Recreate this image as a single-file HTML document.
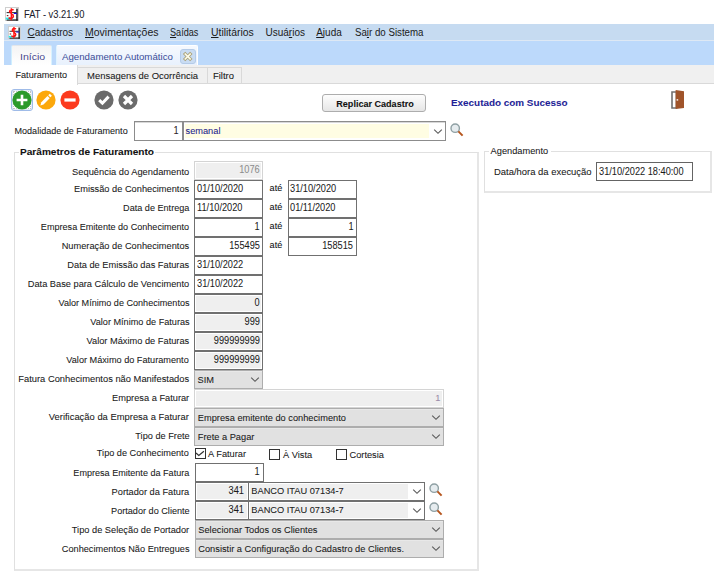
<!DOCTYPE html>
<html><head><meta charset="utf-8"><title>FAT</title>
<style>
html,body{margin:0;padding:0}
body{width:720px;height:575px;background:#fff;position:relative;overflow:hidden;font-family:"Liberation Sans",sans-serif}
.a{position:absolute}
.t{position:absolute;white-space:nowrap;line-height:20px;-webkit-text-stroke:0.07px currentColor}
u{text-decoration:underline;text-underline-offset:1px}
</style></head><body>
<svg class="a" style="left:5px;top:7px" width="14" height="14" viewBox="0 0 14 14">
<rect x="0.5" y="0.5" width="13" height="13" fill="#fff" stroke="#cfcfcf" stroke-width="1"/>
<rect x="11.3" y="1.6" width="1.4" height="12" fill="#111"/>
<rect x="1.6" y="12.4" width="11.1" height="1.2" fill="#111"/>
<rect x="1.6" y="5.2" width="9.8" height="0.9" fill="#111"/>
<rect x="8.8" y="6" width="3" height="1" fill="#10e"/>
<rect x="0.8" y="10.6" width="7.2" height="1.8" fill="#2ee"/>
<rect x="1.8" y="8" width="1.6" height="1.2" fill="#822"/>
<path d="M8.6 3.2C7.6 2.3 4.6 2.3 4.6 4.6C4.6 6.6 8.4 6.4 8.4 9.2C8.4 11.6 5 11.8 3.6 10.6M6.4 1.2V13.2" stroke="#f11" stroke-width="1.5" fill="none"/>
</svg>
<div class="t" style="left:23.5px;top:5px;font-size:10.4px;font-weight:normal;color:#1c1c2c;transform:scaleX(0.900);transform-origin:left center;">FAT - v3.21.90</div>
<div class="a" style="left:4px;top:24px;width:710px;height:16px;background:#c6dbf1"></div>
<div class="a" style="left:4px;top:40px;width:710px;height:1px;background:#dde8f4"></div>
<div class="a" style="left:4px;top:41px;width:710px;height:24px;background:#bcd9fb"></div>
<svg class="a" style="left:7.5px;top:26px" width="13" height="13" viewBox="0 0 14 14">
<rect x="0.5" y="0.5" width="13" height="13" fill="#fff" stroke="#cfcfcf" stroke-width="1"/>
<rect x="11.3" y="1.6" width="1.4" height="12" fill="#111"/>
<rect x="1.6" y="12.4" width="11.1" height="1.2" fill="#111"/>
<rect x="1.6" y="5.2" width="9.8" height="0.9" fill="#111"/>
<rect x="8.8" y="6" width="3" height="1" fill="#10e"/>
<rect x="0.8" y="10.6" width="7.2" height="1.8" fill="#2ee"/>
<rect x="1.8" y="8" width="1.6" height="1.2" fill="#822"/>
<path d="M8.6 3.2C7.6 2.3 4.6 2.3 4.6 4.6C4.6 6.6 8.4 6.4 8.4 9.2C8.4 11.6 5 11.8 3.6 10.6M6.4 1.2V13.2" stroke="#f11" stroke-width="1.5" fill="none"/>
</svg>
<div class="t" style="left:27.5px;top:23px;font-size:10px;font-weight:normal;color:#1a1a1a;-webkit-text-stroke:0;"><u>C</u>adastros</div>
<div class="t" style="left:84.5px;top:23px;font-size:10px;font-weight:normal;color:#1a1a1a;-webkit-text-stroke:0;transform:scaleX(1.050);transform-origin:left center;"><u>M</u>ovimentações</div>
<div class="t" style="left:169.5px;top:23px;font-size:10px;font-weight:normal;color:#1a1a1a;-webkit-text-stroke:0;transform:scaleX(0.910);transform-origin:left center;"><u>S</u>aídas</div>
<div class="t" style="left:210.5px;top:23px;font-size:10px;font-weight:normal;color:#1a1a1a;-webkit-text-stroke:0;transform:scaleX(1.040);transform-origin:left center;"><u>U</u>tilitários</div>
<div class="t" style="left:265.5px;top:23px;font-size:10px;font-weight:normal;color:#1a1a1a;-webkit-text-stroke:0;">Usuá<u>r</u>ios</div>
<div class="t" style="left:316.2px;top:23px;font-size:10px;font-weight:normal;color:#1a1a1a;-webkit-text-stroke:0;"><u>A</u>juda</div>
<div class="t" style="left:355px;top:23px;font-size:10px;font-weight:normal;color:#1a1a1a;-webkit-text-stroke:0;transform:scaleX(0.970);transform-origin:left center;">Sa<u>i</u>r do Sistema</div>
<div class="a" style="left:11px;top:45px;width:41px;height:20px;background:linear-gradient(#f4f4f4,#ffffff);border:1px solid #e2e6ea;border-left-color:#cfefff;border-right-color:#d8f2ff;border-bottom:none;border-radius:2px 2px 0 0;box-sizing:border-box"></div>
<div class="t" style="left:19.9px;top:47px;font-size:9.7px;font-weight:normal;color:#48488e;-webkit-text-stroke:0;transform:scaleX(1.090);transform-origin:left center;">Início</div>
<div class="a" style="left:56px;top:45px;width:142px;height:20px;background:linear-gradient(#f6f9fe,#e8f1fd);border:1px solid #ffffff;border-left-color:#dff4ff;border-bottom:none;border-radius:2px 2px 0 0;box-sizing:border-box"></div>
<div class="t" style="left:62px;top:47px;font-size:9.56px;font-weight:normal;color:#3a4c98;-webkit-text-stroke:0;transform:scaleX(1.014);transform-origin:left center;">Agendamento Automático</div>
<div class="a" style="left:180px;top:49px;width:16px;height:15px;background:#c9dcf3;border:1px solid #b4cbe8;border-radius:3px;box-sizing:border-box"></div>
<svg class="a" style="left:182px;top:51px" width="12" height="11" viewBox="0 0 12 11"><path d="M3.3 3.1L8.1 7.9M8.1 3.1L3.3 7.9" stroke="#aaa27a" stroke-width="3.4" stroke-linecap="square"/><path d="M3.3 3.1L8.1 7.9M8.1 3.1L3.3 7.9" stroke="#fdfbe8" stroke-width="1.7" stroke-linecap="square"/></svg>
<div class="a" style="left:4px;top:65px;width:710px;height:19px;background:#f0f0f0;border-bottom:1px solid #d9d9d9;box-sizing:border-box"></div>
<div class="a" style="left:4px;top:65px;width:74px;height:20px;background:#ffffff;border-right:1px solid #d9d9d9;box-sizing:border-box"></div>
<div class="a" style="left:78px;top:67px;width:130px;height:17px;background:#f0f0f0;border:1px solid #d9d9d9;border-left:none;box-sizing:border-box"></div>
<div class="a" style="left:207px;top:67px;width:35px;height:17px;background:#f0f0f0;border:1px solid #d9d9d9;box-sizing:border-box"></div>
<div class="t" style="left:15.5px;top:65px;font-size:9.1px;font-weight:normal;color:#1a1a1a;">Faturamento</div>
<div class="t" style="left:87px;top:66px;font-size:9.4px;font-weight:normal;color:#1a1a1a;transform:scaleX(1.010);transform-origin:left center;">Mensagens de Ocorrência</div>
<div class="t" style="left:213px;top:66px;font-size:9.0px;font-weight:normal;color:#1a1a1a;transform:scaleX(1.050);transform-origin:left center;">Filtro</div>
<div class="a" style="left:11px;top:89px;width:22px;height:22px;border:1px solid #9fbbe8;border-radius:3px;box-shadow:inset 0 0 0 0.5px #c9dbf5;box-sizing:border-box"></div>
<div class="a" style="left:13px;top:91px;width:18px;height:18px;border:1px dotted #c4c4c4;box-sizing:border-box"></div>
<svg class="a" style="left:12.3px;top:89.6px" width="20" height="20" viewBox="0 0 20 20"><circle cx="10" cy="10" r="9.6" fill="#2b9a2b"/><path d="M10 4.8V15.2M4.6 10H15.4" stroke="#fff" stroke-width="2.6"/></svg>
<svg class="a" style="left:36.3px;top:89.7px" width="20" height="20" viewBox="0 0 20 20"><circle cx="10" cy="10" r="9.6" fill="#fca80c"/><path d="M4.4 15.4L5.3 12.3L11.5 6.1L13.7 8.3L7.5 14.5Z" fill="#fff"/><path d="M13.3 6.3L14.8 4.8" stroke="#fff" stroke-width="3"/></svg>
<svg class="a" style="left:60.3px;top:89.8px" width="20" height="20" viewBox="0 0 20 20"><circle cx="10" cy="10" r="9.6" fill="#fc3a1e"/><rect x="4.4" y="8.4" width="11.2" height="3.2" fill="#fff"/></svg>
<svg class="a" style="left:94.2px;top:89.8px" width="20" height="20" viewBox="0 0 20 20"><circle cx="10" cy="10" r="9.6" fill="#6b6b6b"/><path d="M5.2 10.2L8.4 13.2L14.6 6.6" stroke="#fff" stroke-width="3" fill="none"/></svg>
<svg class="a" style="left:118.0px;top:89.8px" width="20" height="20" viewBox="0 0 20 20"><circle cx="10" cy="10" r="9.6" fill="#6b6b6b"/><path d="M6 6L14 14M14 6L6 14" stroke="#fff" stroke-width="3.2"/></svg>
<div class="a" style="left:322px;top:94px;width:104px;height:18px;background:linear-gradient(#fdfdfd,#e6e6e6);border:1px solid #adadad;border-radius:3px;box-sizing:border-box"></div>
<div class="t" style="left:336.3px;top:94px;font-size:9.05px;font-weight:bold;color:#111;">Replicar Cadastro</div>
<div class="t" style="left:451.0px;top:93px;font-size:9.73px;font-weight:bold;color:#1f1f97;transform:scaleX(1.018);transform-origin:left center;">Executado com Sucesso</div>
<svg class="a" style="left:670px;top:89px" width="16" height="21" viewBox="0 0 16 21">
<path d="M2 3H6.5V19H2Z" fill="none" stroke="#707070" stroke-width="1.6"/>
<path d="M5.6 1L14 2.2V19L5.6 20Z" fill="#a0542a"/>
<rect x="6.6" y="10.2" width="1.6" height="1.4" fill="#fff"/>
</svg>
<div class="t" style="left:14.5px;top:121px;font-size:9.05px;font-weight:normal;color:#1a1a1a;">Modalidade de Faturamento</div>
<div class="a" style="left:134px;top:121px;width:312px;height:20px;background:#fff;border:1px solid #8c8c8c;box-shadow:inset 0 1px 0 #d8d8d8;box-sizing:border-box"></div>
<div class="a" style="left:182px;top:122px;width:2px;height:18px;background:#8c8c8c"></div>
<div class="t" style="right:541px;top:121px;font-size:10.2px;font-weight:normal;color:#2a1a2a;text-align:right;-webkit-text-stroke:0.04px currentColor;transform:scaleX(0.905);transform-origin:right center;">1</div>
<div class="a" style="left:185px;top:124px;width:244px;height:14px;background:#fffde3"></div>
<div class="t" style="left:185.5px;top:121px;font-size:9.25px;font-weight:normal;color:#1e1e8e;">semanal</div>
<svg class="a" style="left:432.8px;top:129.2px" width="10" height="6" viewBox="0 0 10 6"><path d="M1.2 0.6L5 4.3L8.8 0.6" stroke="#5a5a5a" stroke-width="1.15" fill="none"/></svg>
<svg class="a" style="left:450px;top:123px" width="14" height="14" viewBox="0 0 14 14">
<circle cx="5.2" cy="5.2" r="4.2" fill="#e6ecef" stroke="#8fa0a4" stroke-width="1.4"/>
<path d="M8.4 8.4L12.6 12.6" stroke="#b5541c" stroke-width="2"/>
</svg>
<div class="a" style="left:14px;top:152px;width:465px;height:419px;border:1px solid #e0e0e0;border-right:2px solid #e6e6e6;border-bottom:2px solid #e6e6e6;box-sizing:border-box"></div>
<div class="a" style="left:19px;top:145px;width:136px;height:12px;background:#fff"></div>
<div class="t" style="left:19.8px;top:142px;font-size:9.5px;font-weight:bold;color:#111;transform:scaleX(1.062);transform-origin:left center;">Parâmetros de Faturamento</div>
<div class="a" style="left:484px;top:151px;width:228px;height:42px;border:1px solid #e0e0e0;border-right:2px solid #e6e6e6;border-bottom:2px solid #e6e6e6;box-sizing:border-box"></div>
<div class="a" style="left:489px;top:145px;width:62px;height:12px;background:#fff"></div>
<div class="t" style="left:490.6px;top:141px;font-size:9.25px;font-weight:normal;color:#1a1a1a;">Agendamento</div>
<div class="t" style="left:494px;top:162px;font-size:9.45px;font-weight:normal;color:#1a1a1a;">Data/hora da execução</div>
<div class="a" style="left:596px;top:162px;width:97px;height:19px;background:#fff;border:1px solid #646464;box-sizing:border-box"></div>
<div class="t" style="left:598.5px;top:162px;font-size:10.2px;font-weight:normal;color:#1a1a1a;-webkit-text-stroke:0.04px currentColor;transform:scaleX(0.905);transform-origin:left center;">31/10/2022 18:40:00</div>
<div class="t" style="right:530.8px;top:162px;font-size:9.25px;font-weight:normal;color:#1a1a1a;text-align:right;transform:scaleX(1.008);transform-origin:right center;">Sequência do Agendamento</div>
<div class="t" style="right:530.8px;top:179px;font-size:9.25px;font-weight:normal;color:#1a1a1a;text-align:right;">Emissão de Conhecimentos</div>
<div class="t" style="right:530.8px;top:198px;font-size:9.25px;font-weight:normal;color:#1a1a1a;text-align:right;transform:scaleX(0.984);transform-origin:right center;">Data de Entrega</div>
<div class="t" style="right:530.8px;top:217px;font-size:9.25px;font-weight:normal;color:#1a1a1a;text-align:right;transform:scaleX(0.981);transform-origin:right center;">Empresa Emitente do Conhecimento</div>
<div class="t" style="right:530.8px;top:236px;font-size:9.25px;font-weight:normal;color:#1a1a1a;text-align:right;">Numeração de Conhecimentos</div>
<div class="t" style="right:530.8px;top:255px;font-size:9.25px;font-weight:normal;color:#1a1a1a;text-align:right;">Data de Emissão das Faturas</div>
<div class="t" style="right:530.8px;top:274px;font-size:9.25px;font-weight:normal;color:#1a1a1a;text-align:right;">Data Base para Cálculo de Vencimento</div>
<div class="t" style="right:530.8px;top:293px;font-size:9.25px;font-weight:normal;color:#1a1a1a;text-align:right;transform:scaleX(0.981);transform-origin:right center;">Valor Mínimo de Conhecimentos</div>
<div class="t" style="right:530.8px;top:312px;font-size:9.25px;font-weight:normal;color:#1a1a1a;text-align:right;transform:scaleX(0.987);transform-origin:right center;">Valor Mínimo de Faturas</div>
<div class="t" style="right:530.8px;top:331px;font-size:9.25px;font-weight:normal;color:#1a1a1a;text-align:right;">Valor Máximo de Faturas</div>
<div class="t" style="right:530.8px;top:350px;font-size:9.25px;font-weight:normal;color:#1a1a1a;text-align:right;transform:scaleX(0.989);transform-origin:right center;">Valor Máximo do Faturamento</div>
<div class="t" style="right:530.8px;top:369px;font-size:9.25px;font-weight:normal;color:#1a1a1a;text-align:right;transform:scaleX(1.010);transform-origin:right center;">Fatura Conhecimentos não Manifestados</div>
<div class="t" style="right:530.8px;top:388px;font-size:9.25px;font-weight:normal;color:#1a1a1a;text-align:right;">Empresa a Faturar</div>
<div class="t" style="right:530.8px;top:407px;font-size:9.25px;font-weight:normal;color:#1a1a1a;text-align:right;transform:scaleX(1.016);transform-origin:right center;">Verificação da Empresa a Faturar</div>
<div class="t" style="right:530.8px;top:426px;font-size:9.25px;font-weight:normal;color:#1a1a1a;text-align:right;transform:scaleX(0.994);transform-origin:right center;">Tipo de Frete</div>
<div class="t" style="right:530.8px;top:443px;font-size:9.25px;font-weight:normal;color:#1a1a1a;text-align:right;transform:scaleX(0.991);transform-origin:right center;">Tipo de Conhecimento</div>
<div class="t" style="right:530.8px;top:463px;font-size:9.25px;font-weight:normal;color:#1a1a1a;text-align:right;transform:scaleX(0.980);transform-origin:right center;">Empresa Emitente da Fatura</div>
<div class="t" style="right:530.8px;top:482px;font-size:9.25px;font-weight:normal;color:#1a1a1a;text-align:right;">Portador da Fatura</div>
<div class="t" style="right:530.8px;top:501px;font-size:9.25px;font-weight:normal;color:#1a1a1a;text-align:right;transform:scaleX(0.987);transform-origin:right center;">Portador do Cliente</div>
<div class="t" style="right:530.8px;top:520px;font-size:9.25px;font-weight:normal;color:#1a1a1a;text-align:right;">Tipo de Seleção de Portador</div>
<div class="t" style="right:530.8px;top:539px;font-size:9.25px;font-weight:normal;color:#1a1a1a;text-align:right;transform:scaleX(0.994);transform-origin:right center;">Conhecimentos Não Entregues</div>
<div class="a" style="left:194px;top:161px;width:69px;height:19px;background:#efefef;border:1px solid #d4d4d4;box-shadow:inset 0 0 0 1px #fff;box-sizing:border-box"></div>
<div class="t" style="right:459.9px;top:160px;font-size:10.2px;font-weight:normal;color:#8c8c8c;text-align:right;-webkit-text-stroke:0.04px currentColor;transform:scaleX(0.905);transform-origin:right center;">1076</div>
<div class="a" style="left:194px;top:180px;width:69px;height:19px;background:#fff;border:1px solid #707070;box-shadow:inset 0 0 0 1px #fff;box-sizing:border-box"></div>
<div class="a" style="left:288px;top:180px;width:69px;height:19px;background:#fff;border:1px solid #707070;box-shadow:inset 0 0 0 1px #fff;box-sizing:border-box"></div>
<div class="t" style="left:196.6px;top:179px;font-size:10.2px;font-weight:normal;color:#1a1a1a;-webkit-text-stroke:0.04px currentColor;transform:scaleX(0.905);transform-origin:left center;">01/10/2020</div>
<div class="t" style="left:290.4px;top:179px;font-size:10.2px;font-weight:normal;color:#1a1a1a;-webkit-text-stroke:0.04px currentColor;transform:scaleX(0.905);transform-origin:left center;">31/10/2020</div>
<div class="t" style="left:269.6px;top:178px;font-size:9.1px;font-weight:normal;color:#111;">até</div>
<div class="a" style="left:194px;top:199px;width:69px;height:19px;background:#fff;border:1px solid #707070;box-shadow:inset 0 0 0 1px #fff;box-sizing:border-box"></div>
<div class="a" style="left:288px;top:199px;width:69px;height:19px;background:#fff;border:1px solid #707070;box-shadow:inset 0 0 0 1px #fff;box-sizing:border-box"></div>
<div class="t" style="left:196.6px;top:198px;font-size:10.2px;font-weight:normal;color:#1a1a1a;-webkit-text-stroke:0.04px currentColor;transform:scaleX(0.905);transform-origin:left center;">11/10/2020</div>
<div class="t" style="left:290.4px;top:198px;font-size:10.2px;font-weight:normal;color:#1a1a1a;-webkit-text-stroke:0.04px currentColor;transform:scaleX(0.905);transform-origin:left center;">01/11/2020</div>
<div class="t" style="left:269.6px;top:197px;font-size:9.1px;font-weight:normal;color:#111;">até</div>
<div class="a" style="left:194px;top:218px;width:69px;height:19px;background:#fff;border:1px solid #707070;box-shadow:inset 0 0 0 1px #fff;box-sizing:border-box"></div>
<div class="a" style="left:288px;top:218px;width:69px;height:19px;background:#fff;border:1px solid #707070;box-shadow:inset 0 0 0 1px #fff;box-sizing:border-box"></div>
<div class="t" style="right:459.9px;top:217px;font-size:10.2px;font-weight:normal;color:#1a1a1a;text-align:right;-webkit-text-stroke:0.04px currentColor;transform:scaleX(0.905);transform-origin:right center;">1</div>
<div class="t" style="right:366.8px;top:217px;font-size:10.2px;font-weight:normal;color:#1a1a1a;text-align:right;-webkit-text-stroke:0.04px currentColor;transform:scaleX(0.905);transform-origin:right center;">1</div>
<div class="t" style="left:269.6px;top:216px;font-size:9.1px;font-weight:normal;color:#111;">até</div>
<div class="a" style="left:194px;top:237px;width:69px;height:19px;background:#fff;border:1px solid #707070;box-shadow:inset 0 0 0 1px #fff;box-sizing:border-box"></div>
<div class="a" style="left:288px;top:237px;width:69px;height:19px;background:#fff;border:1px solid #707070;box-shadow:inset 0 0 0 1px #fff;box-sizing:border-box"></div>
<div class="t" style="right:459.9px;top:236px;font-size:10.2px;font-weight:normal;color:#1a1a1a;text-align:right;-webkit-text-stroke:0.04px currentColor;transform:scaleX(0.905);transform-origin:right center;">155495</div>
<div class="t" style="right:366.8px;top:236px;font-size:10.2px;font-weight:normal;color:#1a1a1a;text-align:right;-webkit-text-stroke:0.04px currentColor;transform:scaleX(0.905);transform-origin:right center;">158515</div>
<div class="t" style="left:269.6px;top:235px;font-size:9.1px;font-weight:normal;color:#111;">até</div>
<div class="a" style="left:194px;top:256px;width:69px;height:19px;background:#fff;border:1px solid #707070;box-shadow:inset 0 0 0 1px #fff;box-sizing:border-box"></div>
<div class="t" style="left:196.6px;top:255px;font-size:10.2px;font-weight:normal;color:#1a1a1a;-webkit-text-stroke:0.04px currentColor;transform:scaleX(0.905);transform-origin:left center;">31/10/2022</div>
<div class="a" style="left:194px;top:275px;width:69px;height:19px;background:#fff;border:1px solid #707070;box-shadow:inset 0 0 0 1px #fff;box-sizing:border-box"></div>
<div class="t" style="left:196.6px;top:274px;font-size:10.2px;font-weight:normal;color:#1a1a1a;-webkit-text-stroke:0.04px currentColor;transform:scaleX(0.905);transform-origin:left center;">31/10/2022</div>
<div class="a" style="left:194px;top:294px;width:69px;height:19px;background:#efefef;border:1px solid #707070;box-shadow:inset 0 0 0 1px #fff;box-sizing:border-box"></div>
<div class="t" style="right:459.9px;top:293px;font-size:10.2px;font-weight:normal;color:#1a1a1a;text-align:right;-webkit-text-stroke:0.04px currentColor;transform:scaleX(0.905);transform-origin:right center;">0</div>
<div class="a" style="left:194px;top:313px;width:69px;height:19px;background:#efefef;border:1px solid #707070;box-shadow:inset 0 0 0 1px #fff;box-sizing:border-box"></div>
<div class="t" style="right:459.9px;top:312px;font-size:10.2px;font-weight:normal;color:#1a1a1a;text-align:right;-webkit-text-stroke:0.04px currentColor;transform:scaleX(0.905);transform-origin:right center;">999</div>
<div class="a" style="left:194px;top:332px;width:69px;height:19px;background:#efefef;border:1px solid #707070;box-shadow:inset 0 0 0 1px #fff;box-sizing:border-box"></div>
<div class="t" style="right:459.9px;top:331px;font-size:10.2px;font-weight:normal;color:#1a1a1a;text-align:right;-webkit-text-stroke:0.04px currentColor;transform:scaleX(0.905);transform-origin:right center;">999999999</div>
<div class="a" style="left:194px;top:351px;width:69px;height:19px;background:#efefef;border:1px solid #707070;box-shadow:inset 0 0 0 1px #fff;box-sizing:border-box"></div>
<div class="t" style="right:459.9px;top:350px;font-size:10.2px;font-weight:normal;color:#1a1a1a;text-align:right;-webkit-text-stroke:0.04px currentColor;transform:scaleX(0.905);transform-origin:right center;">999999999</div>
<div class="a" style="left:194px;top:370px;width:69px;height:19px;background:#e1e1e1;border:1px solid #adadad;box-shadow:inset 0 1px 0 #e8e8e8;box-sizing:border-box"></div>
<div class="t" style="left:197.5px;top:370px;font-size:9.25px;font-weight:normal;color:#1a1a1a;">SIM</div>
<svg class="a" style="left:250px;top:377.2px" width="10" height="6" viewBox="0 0 10 6"><path d="M1.2 0.6L5 4.3L8.8 0.6" stroke="#5a5a5a" stroke-width="1.15" fill="none"/></svg>
<div class="a" style="left:194px;top:389px;width:250px;height:19px;background:#efefef;border:1px solid #d4d4d4;box-shadow:inset 0 0 0 1px #fff;box-sizing:border-box"></div>
<div class="t" style="right:279.6px;top:388px;font-size:9.25px;font-weight:normal;color:#9a8aa8;text-align:right;">1</div>
<div class="a" style="left:194px;top:408px;width:250px;height:19px;background:#e1e1e1;border:1px solid #adadad;box-shadow:inset 0 1px 0 #e8e8e8;box-sizing:border-box"></div>
<div class="t" style="left:197.8px;top:408px;font-size:9.25px;font-weight:normal;color:#1a1a1a;">Empresa emitente do conhecimento</div>
<svg class="a" style="left:431.0px;top:415.0px" width="10" height="6" viewBox="0 0 10 6"><path d="M1.2 0.6L5 4.3L8.8 0.6" stroke="#5a5a5a" stroke-width="1.15" fill="none"/></svg>
<div class="a" style="left:194px;top:427px;width:250px;height:19px;background:#e1e1e1;border:1px solid #adadad;box-shadow:inset 0 1px 0 #e8e8e8;box-sizing:border-box"></div>
<div class="t" style="left:197.8px;top:427px;font-size:9.25px;font-weight:normal;color:#1a1a1a;">Frete a Pagar</div>
<svg class="a" style="left:431.0px;top:434.0px" width="10" height="6" viewBox="0 0 10 6"><path d="M1.2 0.6L5 4.3L8.8 0.6" stroke="#5a5a5a" stroke-width="1.15" fill="none"/></svg>
<div class="a" style="left:195px;top:448px;width:11px;height:11px;background:#fff;border:1px solid #333;box-sizing:border-box"></div>
<svg class="a" style="left:195px;top:448px" width="11" height="11" viewBox="0 0 11 11"><path d="M1.0 5.0L3.8 7.5L8.9 3.2" stroke="#333" stroke-width="1.2" fill="none"/></svg>
<div class="t" style="left:208px;top:444px;font-size:9.25px;font-weight:normal;color:#1a1a1a;">A Faturar</div>
<div class="a" style="left:269px;top:449px;width:11px;height:11px;background:#fff;border:1px solid #333;box-sizing:border-box"></div>
<div class="t" style="left:283px;top:445px;font-size:9.25px;font-weight:normal;color:#1a1a1a;">À Vista</div>
<div class="a" style="left:336px;top:449px;width:11px;height:11px;background:#fff;border:1px solid #333;box-sizing:border-box"></div>
<div class="t" style="left:349.5px;top:445px;font-size:9.25px;font-weight:normal;color:#1a1a1a;">Cortesia</div>
<div class="a" style="left:195px;top:463px;width:69px;height:19px;background:#fff;border:1px solid #707070;box-shadow:inset 0 0 0 1px #fff;box-sizing:border-box"></div>
<div class="t" style="right:460.5px;top:462px;font-size:10.2px;font-weight:normal;color:#1a1a1a;text-align:right;-webkit-text-stroke:0.04px currentColor;transform:scaleX(0.905);transform-origin:right center;">1</div>
<div class="a" style="left:195px;top:482px;width:54px;height:19px;background:#efefef;border:1px solid #707070;box-shadow:inset 0 0 0 1px #fff;box-sizing:border-box"></div>
<div class="t" style="right:475.8px;top:481px;font-size:10.2px;font-weight:normal;color:#1a1a1a;text-align:right;-webkit-text-stroke:0.04px currentColor;transform:scaleX(0.905);transform-origin:right center;">341</div>
<div class="a" style="left:248px;top:482px;width:177px;height:19px;background:#fff;border:1px solid #707070;box-shadow:inset 0 0 0 1px #fff;box-sizing:border-box"></div>
<div class="a" style="left:250px;top:484px;width:158px;height:15px;background:#efefef"></div>
<div class="t" style="left:251.3px;top:481px;font-size:9.25px;font-weight:normal;color:#1a1a1a;">BANCO ITAU 07134-7</div>
<svg class="a" style="left:412.3px;top:489.3px" width="10" height="6" viewBox="0 0 10 6"><path d="M1.2 0.6L5 4.3L8.8 0.6" stroke="#5a5a5a" stroke-width="1.15" fill="none"/></svg>
<svg class="a" style="left:429px;top:483px" width="14" height="14" viewBox="0 0 14 14">
<circle cx="5.2" cy="5.2" r="4.2" fill="#e6ecef" stroke="#8fa0a4" stroke-width="1.4"/>
<path d="M8.4 8.4L12.6 12.6" stroke="#b5541c" stroke-width="2"/>
</svg>
<div class="a" style="left:195px;top:501px;width:54px;height:19px;background:#efefef;border:1px solid #707070;box-shadow:inset 0 0 0 1px #fff;box-sizing:border-box"></div>
<div class="t" style="right:475.8px;top:500px;font-size:10.2px;font-weight:normal;color:#1a1a1a;text-align:right;-webkit-text-stroke:0.04px currentColor;transform:scaleX(0.905);transform-origin:right center;">341</div>
<div class="a" style="left:248px;top:501px;width:177px;height:19px;background:#fff;border:1px solid #707070;box-shadow:inset 0 0 0 1px #fff;box-sizing:border-box"></div>
<div class="a" style="left:250px;top:503px;width:158px;height:15px;background:#efefef"></div>
<div class="t" style="left:251.3px;top:500px;font-size:9.25px;font-weight:normal;color:#1a1a1a;">BANCO ITAU 07134-7</div>
<svg class="a" style="left:412.3px;top:508.3px" width="10" height="6" viewBox="0 0 10 6"><path d="M1.2 0.6L5 4.3L8.8 0.6" stroke="#5a5a5a" stroke-width="1.15" fill="none"/></svg>
<svg class="a" style="left:429px;top:502px" width="14" height="14" viewBox="0 0 14 14">
<circle cx="5.2" cy="5.2" r="4.2" fill="#e6ecef" stroke="#8fa0a4" stroke-width="1.4"/>
<path d="M8.4 8.4L12.6 12.6" stroke="#b5541c" stroke-width="2"/>
</svg>
<div class="a" style="left:195px;top:520px;width:249px;height:19px;background:#e1e1e1;border:1px solid #adadad;box-shadow:inset 0 1px 0 #e8e8e8;box-sizing:border-box"></div>
<div class="t" style="left:198.3px;top:520px;font-size:9.25px;font-weight:normal;color:#1a1a1a;">Selecionar Todos os Clientes</div>
<svg class="a" style="left:431.0px;top:527.0px" width="10" height="6" viewBox="0 0 10 6"><path d="M1.2 0.6L5 4.3L8.8 0.6" stroke="#5a5a5a" stroke-width="1.15" fill="none"/></svg>
<div class="a" style="left:195px;top:539px;width:249px;height:19px;background:#e1e1e1;border:1px solid #adadad;box-shadow:inset 0 1px 0 #e8e8e8;box-sizing:border-box"></div>
<div class="t" style="left:198.3px;top:539px;font-size:9.25px;font-weight:normal;color:#1a1a1a;">Consistir a Configuração do Cadastro de Clientes.</div>
<svg class="a" style="left:431.0px;top:546.0px" width="10" height="6" viewBox="0 0 10 6"><path d="M1.2 0.6L5 4.3L8.8 0.6" stroke="#5a5a5a" stroke-width="1.15" fill="none"/></svg>
</body></html>
